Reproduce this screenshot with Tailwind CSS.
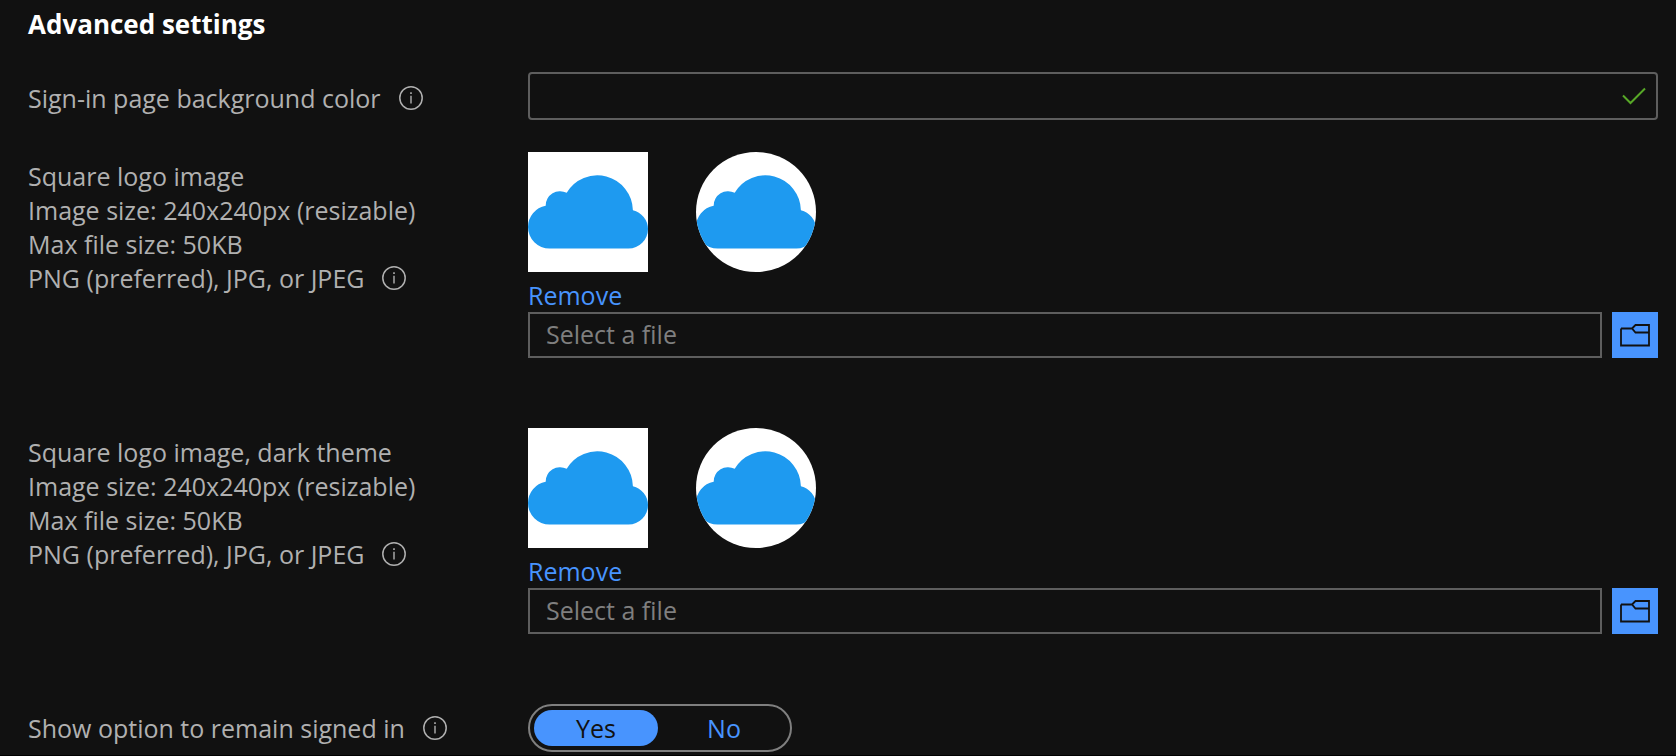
<!DOCTYPE html>
<html lang="en">
<head>
<meta charset="utf-8">
<title>Advanced settings</title>
<script src="https://cdn.jsdelivr.net/npm/@tailwindcss/browser@4"></script>
</head>
<body class="min-h-screen border-b border-black bg-[#111111] font-['Open_Sans','Noto_Sans',sans-serif] text-[25px] leading-[34px] text-[#b0b0b0]">
<svg class="hidden" aria-hidden="true">
  <symbol id="info" viewBox="0 0 24 24">
    <circle cx="12" cy="12" r="11.2" fill="none" stroke="currentColor" stroke-width="1.5"/>
    <path d="M11.2 6.2h1.6v1.8h-1.6zM11.3 9.8h1.4v7.6h-1.4z" fill="currentColor"/>
  </symbol>
  <symbol id="cloud" viewBox="0 0 120 120">
    <path fill="#fff" d="M0 0h120v120H0z"/>
    <path fill="#1e9af0" d="M21.6 96.6A21.6 21.6 0 0 1 0 75A21.600 21.600 0 0 1 17.700 53.700A14.400 14.400 0 0 1 38.700 40.800A35.600 35.600 0 0 1 104.900 58.200A19.700 19.700 0 0 1 120 77A19.700 19.700 0 0 1 100.500 96.600z"/>
  </symbol>
  <symbol id="folder" viewBox="0 0 30 24">
    <path d="M1 5.500H12L15.500 9.500H29M12 5.500L15.500 2H29V22.500H1V5.500" fill="none" stroke="#111111" stroke-width="1.800"/>
  </symbol>
</svg>
<main class="pt-[7px] pr-[18px] pl-7">
  <h1 class="text-[26px] font-bold text-white">Advanced settings</h1>

  <div class="mt-[31px] grid grid-cols-[500px_1fr]">
    <div class="flex items-center gap-[18px] pt-[3px]">
      <label for="bg-color">Sign-in page background color</label>
      <svg class="size-6" role="img" aria-label="More information"><use href="#info"/></svg>
    </div>
    <div class="flex h-12 items-center rounded border-2 border-[#5e5e5e] pr-[10px]">
      <input id="bg-color" type="text" class="h-full min-w-0 flex-1 px-4 text-white outline-none">
      <svg class="h-[18px] w-6" viewBox="0 0 24 18" fill="none" stroke="#57a827" stroke-width="2" aria-hidden="true"><path d="M1 8.500L8.500 16L23 1.500"/></svg>
    </div>
  </div>

  <div class="mt-8 grid grid-cols-[500px_1fr]">
    <div class="pt-[7px]">
      <label for="logo-light">Square logo image<br>Image size: 240x240px (resizable)<br>Max file size: 50KB</label>
      <div class="flex items-center gap-[18px]">
        <span>PNG (preferred), JPG, or JPEG</span>
        <svg class="size-6" role="img" aria-label="More information"><use href="#info"/></svg>
      </div>
    </div>
    <div>
      <div class="flex gap-12">
        <svg class="size-[120px]" role="img" aria-label="Square logo preview"><use href="#cloud"/></svg>
        <svg class="size-[120px] rounded-full" role="img" aria-label="Round logo preview"><use href="#cloud"/></svg>
      </div>
      <a href="#" class="mt-[6px] block w-fit text-[#4894fe]">Remove</a>
      <div class="flex gap-[10px]">
        <input id="logo-light" type="text" placeholder="Select a file" class="h-[46px] min-w-0 flex-1 border-2 border-[#5e5e5e] px-4 pb-[2px] outline-none placeholder:text-[#7f7f7f]">
        <button type="button" aria-label="Browse" class="flex size-[46px] items-center justify-center bg-[#4894fe]"><svg class="h-6 w-[30px]"><use href="#folder"/></svg></button>
      </div>
    </div>
  </div>

  <div class="mt-[70px] grid grid-cols-[500px_1fr]">
    <div class="pt-[7px]">
      <label for="logo-dark">Square logo image, dark theme<br>Image size: 240x240px (resizable)<br>Max file size: 50KB</label>
      <div class="flex items-center gap-[18px]">
        <span>PNG (preferred), JPG, or JPEG</span>
        <svg class="size-6" role="img" aria-label="More information"><use href="#info"/></svg>
      </div>
    </div>
    <div>
      <div class="flex gap-12">
        <svg class="size-[120px]" role="img" aria-label="Square logo preview, dark theme"><use href="#cloud"/></svg>
        <svg class="size-[120px] rounded-full" role="img" aria-label="Round logo preview, dark theme"><use href="#cloud"/></svg>
      </div>
      <a href="#" class="mt-[6px] block w-fit text-[#4894fe]">Remove</a>
      <div class="flex gap-[10px]">
        <input id="logo-dark" type="text" placeholder="Select a file" class="h-[46px] min-w-0 flex-1 border-2 border-[#5e5e5e] px-4 pb-[2px] outline-none placeholder:text-[#7f7f7f]">
        <button type="button" aria-label="Browse" class="flex size-[46px] items-center justify-center bg-[#4894fe]"><svg class="h-6 w-[30px]"><use href="#folder"/></svg></button>
      </div>
    </div>
  </div>

  <div class="mt-[70px] grid grid-cols-[500px_1fr]">
    <div class="flex items-center gap-[18px]">
      <span id="remain">Show option to remain signed in</span>
      <svg class="size-6" role="img" aria-label="More information"><use href="#info"/></svg>
    </div>
    <div role="group" aria-labelledby="remain" class="flex w-[264px] gap-1 rounded-full border-2 border-[#7f7f7f] p-1">
      <button type="button" aria-pressed="true" class="h-9 flex-1 rounded-full bg-[#4894fe] text-[#111111]">Yes</button>
      <button type="button" aria-pressed="false" class="h-9 flex-1 rounded-full text-[#4894fe]">No</button>
    </div>
  </div>
</main>
</body>
</html>
